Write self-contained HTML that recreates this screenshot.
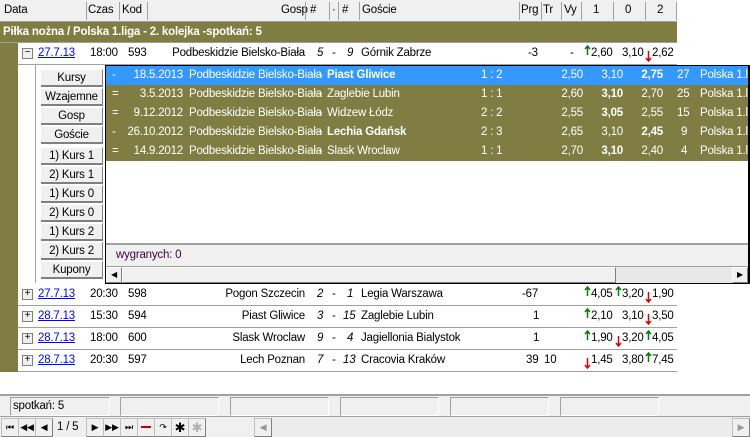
<!DOCTYPE html>
<html><head><meta charset="utf-8"><style>
*{margin:0;padding:0;box-sizing:border-box}
body{width:750px;height:437px;overflow:hidden;background:#fff;font-family:"Liberation Sans",sans-serif;font-size:11.5px;color:#000;position:relative;letter-spacing:-0.2px}
.a{position:absolute;white-space:nowrap}
.hdr{position:absolute;left:0;top:0;width:677px;height:22px;background:#f0f0f0;border-bottom:1px solid #a0a0a0}
.hdr .s{position:absolute;top:2px;width:1px;height:18px;background:#a0a0a0}
.ol{background:#7f7d42}
.row{position:absolute;left:18px;width:659px;height:22px;border-bottom:1px solid #a0a0a0;background:#fff}
.pm{position:absolute;left:4px;top:5px;width:11px;height:11px;border:1px solid #808080;background:#f0f0f0;font-size:10px;line-height:8px;text-align:center}
.lnk{color:#0000ff;text-decoration:underline}
.btn{position:absolute;left:41px;width:62px;height:18px;background:#f0f0f0;border-bottom:2px solid #808080;border-right:1px solid #808080;border-top:1px solid #fff;text-align:center;line-height:16px}
.pr{position:absolute;left:106px;width:642px;height:19px;color:#fff;line-height:19px;overflow:hidden;white-space:nowrap}
.pr span{position:absolute;white-space:nowrap}
.up,.dn{position:absolute;width:7px;height:11px}
.up{top:2px}.dn{top:8px}
.tb{position:absolute;top:418px;width:18px;height:19px;background:#f0f0f0;border:1px solid #c0c0c0;border-right-color:#808080;border-bottom-color:#808080;text-align:center;font-size:9px;line-height:17px}
.sb{position:absolute;top:397px;height:19px;border:1px solid #a0a0a0;border-right-color:#fff;border-bottom-color:#fff}
</style></head><body>
<svg width="0" height="0" style="position:absolute"><defs>
<symbol id="u" viewBox="0 0 7 11"><path d="M3.5 1V10M1 4L3.5 1L6 4" stroke="#008000" stroke-width="1.5" fill="none"/></symbol>
<symbol id="d" viewBox="0 0 7 11"><path d="M3.5 0V10M1 7L3.5 10L6 7" stroke="#e00000" stroke-width="1.5" fill="none"/></symbol>
</defs></svg>
<div class="hdr">
<span class="a" style="left:4px;top:4px">Data</span>
<div class="s" style="left:86px"></div><span class="a" style="left:88px;top:4px">Czas</span>
<div class="s" style="left:119px"></div><span class="a" style="left:122px;top:4px">Kod</span>
<div class="s" style="left:147px"></div><span class="a" style="left:281px;top:4px">Gosp</span>
<div class="s" style="left:305px"></div><span class="a" style="left:310px;top:4px">#</span>
<div class="s" style="left:329px"></div><span class="a" style="left:332px;top:4px">·</span>
<div class="s" style="left:338px"></div><span class="a" style="left:342px;top:4px">#</span>
<div class="s" style="left:359px"></div><span class="a" style="left:362px;top:4px">Goście</span>
<div class="s" style="left:519px"></div><span class="a" style="left:521px;top:4px">Prg</span>
<div class="s" style="left:541px"></div><span class="a" style="left:543px;top:4px">Tr</span>
<div class="s" style="left:561px"></div><span class="a" style="left:564px;top:4px">Vy</span>
<div class="s" style="left:581px"></div><span class="a" style="left:593px;top:4px">1</span>
<div class="s" style="left:613px"></div><span class="a" style="left:625px;top:4px">0</span>
<div class="s" style="left:645px"></div><span class="a" style="left:657px;top:4px">2</span>
<div class="s" style="left:676px"></div>
</div>
<div class="a ol" style="left:0;top:22px;width:677px;height:21px;border-bottom:1px solid #a0a0a0"></div>
<span class="a" style="left:3px;top:26px;color:#fff;font-weight:bold">Piłka nożna / Polska 1.liga - 2. kolejka -spotkań: 5</span>
<div class="a ol" style="left:0;top:43px;width:18px;height:329px"></div>

<div class="row" style="top:43px">
<div class="pm">−</div><span class="a lnk" style="left:20px;top:4px">27.7.13</span><span class="a" style="left:72px;top:4px">18:00</span><span class="a" style="left:110px;top:4px">593</span>
<span class="a" style="right:372px;top:4px">Podbeskidzie Bielsko-Biała</span><span class="a" style="left:299px;top:4px;font-style:italic">5</span><span class="a" style="left:314px;top:4px">-</span><span class="a" style="left:329px;top:4px;font-style:italic">9</span><span class="a" style="left:343px;top:4px">Górnik Zabrze</span>
<span class="a" style="left:510px;top:4px">-3</span><span class="a" style="left:552px;top:4px">-</span>
<svg class="up" style="left:566px"><use href="#u"/></svg><span class="a" style="left:573px;top:4px">2,60</span><span class="a" style="left:604px;top:4px">3,10</span><svg class="dn" style="left:627px"><use href="#d"/></svg><span class="a" style="left:634px;top:4px">2,62</span>
</div>

<!-- popup -->
<div class="a" style="left:18px;top:65px;width:87px;height:218px;background:#fff"></div>
<div class="a" style="left:35px;top:65px;width:1px;height:218px;background:#a0a0a0"></div>
<div class="btn" style="top:69px">Kursy</div>
<div class="btn" style="top:88px">Wzajemne</div>
<div class="btn" style="top:107px">Gosp</div>
<div class="btn" style="top:126px">Goście</div>
<div class="btn" style="top:147px">1) Kurs 1</div>
<div class="btn" style="top:166px">2) Kurs 1</div>
<div class="btn" style="top:185px">1) Kurs 0</div>
<div class="btn" style="top:204px">2) Kurs 0</div>
<div class="btn" style="top:223px">1) Kurs 2</div>
<div class="btn" style="top:242px">2) Kurs 2</div>
<div class="btn" style="top:261px">Kupony</div>
<div class="a" style="left:105px;top:65px;width:645px;height:219px;border:1px solid #000;border-right-width:2px;border-bottom-width:2px;background:#fff"></div>

<div class="pr" style="top:66px;background:#3399ff"><span style="left:6px">-</span><span style="right:565px">18.5.2013</span><span style="left:83px">Podbeskidzie Bielsko-Biała</span><span style="left:213px">-</span><span style="left:221px;font-weight:bold">Piast Gliwice</span><span style="left:375px">1 : 2</span><span style="right:165px">2,50</span><span style="right:125px">3,10</span><span style="right:85px;font-weight:bold">2,75</span><span style="left:571px">27</span><span style="left:594px">Polska 1.liga</span></div>
<div class="pr ol" style="top:85px"><span style="left:6px">=</span><span style="right:565px">3.5.2013</span><span style="left:83px">Podbeskidzie Bielsko-Biała</span><span style="left:213px">-</span><span style="left:221px">Zaglebie Lubin</span><span style="left:375px">1 : 1</span><span style="right:165px">2,60</span><span style="right:125px;font-weight:bold">3,10</span><span style="right:85px">2,70</span><span style="left:571px">25</span><span style="left:594px">Polska 1.liga</span></div>
<div class="pr ol" style="top:104px"><span style="left:6px">=</span><span style="right:565px">9.12.2012</span><span style="left:83px">Podbeskidzie Bielsko-Biała</span><span style="left:213px">-</span><span style="left:221px">Widzew Łódz</span><span style="left:375px">2 : 2</span><span style="right:165px">2,55</span><span style="right:125px;font-weight:bold">3,05</span><span style="right:85px">2,55</span><span style="left:571px">15</span><span style="left:594px">Polska 1.liga</span></div>
<div class="pr ol" style="top:123px"><span style="left:6px">-</span><span style="right:565px">26.10.2012</span><span style="left:83px">Podbeskidzie Bielsko-Biała</span><span style="left:213px">-</span><span style="left:221px;font-weight:bold">Lechia Gdańsk</span><span style="left:375px">2 : 3</span><span style="right:165px">2,65</span><span style="right:125px">3,10</span><span style="right:85px;font-weight:bold">2,45</span><span style="left:575px">9</span><span style="left:594px">Polska 1.liga</span></div>
<div class="pr ol" style="top:142px"><span style="left:6px">=</span><span style="right:565px">14.9.2012</span><span style="left:83px">Podbeskidzie Bielsko-Biała</span><span style="left:213px">-</span><span style="left:221px">Slask Wroclaw</span><span style="left:375px">1 : 1</span><span style="right:165px">2,70</span><span style="right:125px;font-weight:bold">3,10</span><span style="right:85px">2,40</span><span style="left:575px">4</span><span style="left:594px">Polska 1.liga</span></div>

<div class="a" style="left:106px;top:243px;width:642px;height:23px;background:#f0f0f0;border-top:2px solid #a0a0a0"></div>
<span class="a" style="left:116px;top:249px;color:#400040">wygranych: 0</span>
<div class="a" style="left:106px;top:266px;width:642px;height:17px;background:#e8e8e8;border-top:1px solid #a0a0a0"></div>
<div class="a" style="left:106px;top:267px;width:16px;height:16px;background:#f0f0f0;border:1px solid #fff;border-right-color:#808080;border-bottom-color:#808080;font-size:8px;text-align:center;line-height:14px">◀</div>
<div class="a" style="left:122px;top:267px;width:494px;height:16px;background:#f0f0f0;border:1px solid #fff;border-right-color:#808080;border-bottom-color:#808080"></div>
<div class="a" style="left:732px;top:267px;width:16px;height:16px;background:#f0f0f0;border:1px solid #fff;border-right-color:#808080;border-bottom-color:#808080;font-size:8px;text-align:center;line-height:14px">▶</div>

<div class="row" style="top:284px">
<div class="pm">+</div><span class="a lnk" style="left:20px;top:4px">27.7.13</span><span class="a" style="left:72px;top:4px">20:30</span><span class="a" style="left:110px;top:4px">598</span>
<span class="a" style="right:372px;top:4px">Pogon Szczecin</span><span class="a" style="left:299px;top:4px;font-style:italic">2</span><span class="a" style="left:314px;top:4px">-</span><span class="a" style="left:329px;top:4px;font-style:italic">1</span><span class="a" style="left:343px;top:4px">Legia Warszawa</span>
<span class="a" style="left:504px;top:4px">-67</span>
<svg class="up" style="left:566px"><use href="#u"/></svg><span class="a" style="left:573px;top:4px">4,05</span><svg class="up" style="left:597px"><use href="#u"/></svg><span class="a" style="left:604px;top:4px">3,20</span><svg class="dn" style="left:627px"><use href="#d"/></svg><span class="a" style="left:634px;top:4px">1,90</span>
</div>
<div class="row" style="top:306px">
<div class="pm">+</div><span class="a lnk" style="left:20px;top:4px">28.7.13</span><span class="a" style="left:72px;top:4px">15:30</span><span class="a" style="left:110px;top:4px">594</span>
<span class="a" style="right:372px;top:4px">Piast Gliwice</span><span class="a" style="left:299px;top:4px;font-style:italic">3</span><span class="a" style="left:314px;top:4px">-</span><span class="a" style="left:325px;top:4px;font-style:italic">15</span><span class="a" style="left:343px;top:4px">Zaglebie Lubin</span>
<span class="a" style="left:515px;top:4px">1</span>
<svg class="up" style="left:566px"><use href="#u"/></svg><span class="a" style="left:573px;top:4px">2,10</span><span class="a" style="left:604px;top:4px">3,10</span><svg class="dn" style="left:627px"><use href="#d"/></svg><span class="a" style="left:634px;top:4px">3,50</span>
</div>
<div class="row" style="top:328px">
<div class="pm">+</div><span class="a lnk" style="left:20px;top:4px">28.7.13</span><span class="a" style="left:72px;top:4px">18:00</span><span class="a" style="left:110px;top:4px">600</span>
<span class="a" style="right:372px;top:4px">Slask Wroclaw</span><span class="a" style="left:299px;top:4px;font-style:italic">9</span><span class="a" style="left:314px;top:4px">-</span><span class="a" style="left:329px;top:4px;font-style:italic">4</span><span class="a" style="left:343px;top:4px">Jagiellonia Bialystok</span>
<span class="a" style="left:515px;top:4px">1</span>
<svg class="up" style="left:566px"><use href="#u"/></svg><span class="a" style="left:573px;top:4px">1,90</span><svg class="dn" style="left:597px"><use href="#d"/></svg><span class="a" style="left:604px;top:4px">3,20</span><svg class="up" style="left:627px"><use href="#u"/></svg><span class="a" style="left:634px;top:4px">4,05</span>
</div>
<div class="row" style="top:350px">
<div class="pm">+</div><span class="a lnk" style="left:20px;top:4px">28.7.13</span><span class="a" style="left:72px;top:4px">20:30</span><span class="a" style="left:110px;top:4px">597</span>
<span class="a" style="right:372px;top:4px">Lech Poznan</span><span class="a" style="left:299px;top:4px;font-style:italic">7</span><span class="a" style="left:314px;top:4px">-</span><span class="a" style="left:325px;top:4px;font-style:italic">13</span><span class="a" style="left:343px;top:4px">Cracovia Kraków</span>
<span class="a" style="left:508px;top:4px">39</span><span class="a" style="left:526px;top:4px">10</span>
<svg class="dn" style="left:566px"><use href="#d"/></svg><span class="a" style="left:573px;top:4px">1,45</span><span class="a" style="left:604px;top:4px">3,80</span><svg class="up" style="left:627px"><use href="#u"/></svg><span class="a" style="left:634px;top:4px">7,45</span>
</div>

<!-- status -->
<div class="a" style="left:0;top:394px;width:750px;height:43px;background:#f0f0f0;border-top:2px solid #a0a0a0"></div>
<div class="sb" style="left:10px;width:100px"></div><span class="a" style="left:13px;top:400px">spotkań: 5</span>
<div class="sb" style="left:120px;width:99px"></div>
<div class="sb" style="left:230px;width:99px"></div>
<div class="sb" style="left:340px;width:99px"></div>
<div class="sb" style="left:450px;width:99px"></div>
<div class="sb" style="left:560px;width:99px"></div>
<div class="a" style="left:0;top:416px;width:750px;height:1px;background:#a0a0a0"></div>
<div class="a" style="left:270px;top:417px;width:480px;height:20px;background:#ececec"></div>
<div class="tb" style="left:1px">⏮</div><div class="tb" style="left:18px">◀◀</div><div class="tb" style="left:35px">◀</div>
<span class="a" style="left:57px;top:421px">1 / 5</span>
<div class="tb" style="left:86px">▶</div><div class="tb" style="left:103px">▶▶</div><div class="tb" style="left:120px">⏭</div>
<div class="tb" style="left:137px"><div style="position:absolute;left:3px;top:7px;width:10px;height:2px;background:#c00000"></div></div>
<div class="tb" style="left:154px">↷</div>
<div class="tb" style="left:171px;font-size:13px">✱</div>
<div class="tb" style="left:188px;font-size:13px;color:#b0b0b0">✱</div>
<div class="tb" style="left:254px;color:#999">◀</div>
<div class="tb" style="left:732px;color:#999">▶</div>
</body></html>
